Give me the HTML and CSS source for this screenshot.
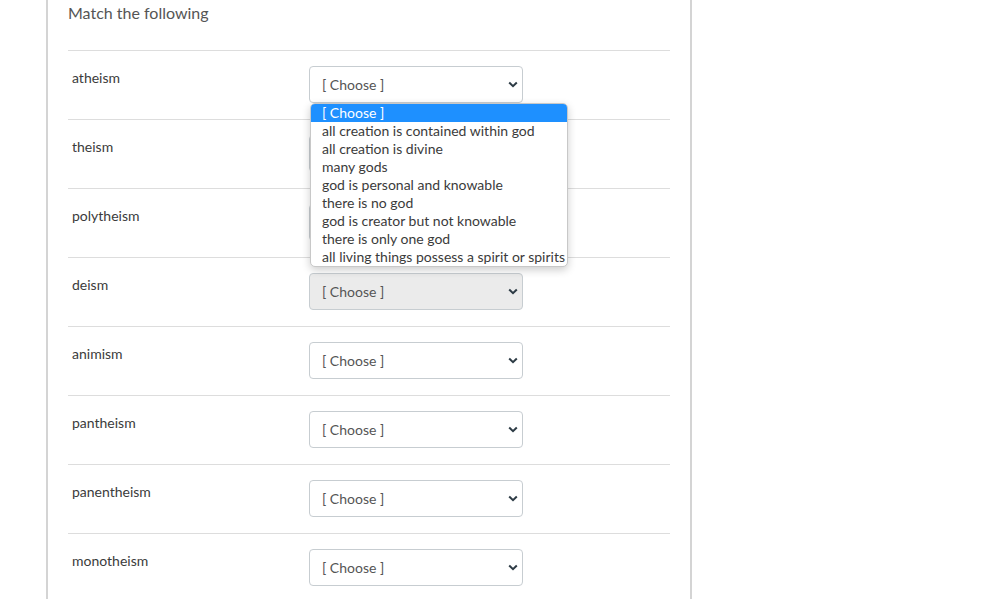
FILE: index.html
```html
<!DOCTYPE html>
<html>
<head>
<meta charset="utf-8">
<link rel="stylesheet" href="styles.css">
</head>
<body>
<div class="card">
  <div class="title">Match the following</div>
  <div class="row">
    <div class="label">atheism</div>
    <div class="select open">
      <span class="val">[ Choose ]</span>
      <svg class="chev" width="10" height="7" viewBox="0 0 10 7"><path d="M1.2 1.5 L5 5.2 L8.8 1.5" fill="none" stroke="#2d3b45" stroke-width="2"/></svg>
      <ul class="list">
        <li class="sel">[ Choose ]</li>
        <li>all creation is contained within god</li>
        <li>all creation is divine</li>
        <li>many gods</li>
        <li>god is personal and knowable</li>
        <li>there is no god</li>
        <li>god is creator but not knowable</li>
        <li>there is only one god</li>
        <li>all living things possess a spirit or spirits</li>
      </ul>
    </div>
  </div>
  <div class="row">
    <div class="label">theism</div>
    <div class="select">
      <span class="val">[ Choose ]</span>
      <svg class="chev" width="10" height="7" viewBox="0 0 10 7"><path d="M1.2 1.5 L5 5.2 L8.8 1.5" fill="none" stroke="#2d3b45" stroke-width="2"/></svg>
    </div>
  </div>
  <div class="row">
    <div class="label">polytheism</div>
    <div class="select">
      <span class="val">[ Choose ]</span>
      <svg class="chev" width="10" height="7" viewBox="0 0 10 7"><path d="M1.2 1.5 L5 5.2 L8.8 1.5" fill="none" stroke="#2d3b45" stroke-width="2"/></svg>
    </div>
  </div>
  <div class="row">
    <div class="label">deism</div>
    <div class="select hover">
      <span class="val">[ Choose ]</span>
      <svg class="chev" width="10" height="7" viewBox="0 0 10 7"><path d="M1.2 1.5 L5 5.2 L8.8 1.5" fill="none" stroke="#2d3b45" stroke-width="2"/></svg>
    </div>
  </div>
  <div class="row">
    <div class="label">animism</div>
    <div class="select">
      <span class="val">[ Choose ]</span>
      <svg class="chev" width="10" height="7" viewBox="0 0 10 7"><path d="M1.2 1.5 L5 5.2 L8.8 1.5" fill="none" stroke="#2d3b45" stroke-width="2"/></svg>
    </div>
  </div>
  <div class="row">
    <div class="label">pantheism</div>
    <div class="select">
      <span class="val">[ Choose ]</span>
      <svg class="chev" width="10" height="7" viewBox="0 0 10 7"><path d="M1.2 1.5 L5 5.2 L8.8 1.5" fill="none" stroke="#2d3b45" stroke-width="2"/></svg>
    </div>
  </div>
  <div class="row">
    <div class="label">panentheism</div>
    <div class="select">
      <span class="val">[ Choose ]</span>
      <svg class="chev" width="10" height="7" viewBox="0 0 10 7"><path d="M1.2 1.5 L5 5.2 L8.8 1.5" fill="none" stroke="#2d3b45" stroke-width="2"/></svg>
    </div>
  </div>
  <div class="row">
    <div class="label">monotheism</div>
    <div class="select">
      <span class="val">[ Choose ]</span>
      <svg class="chev" width="10" height="7" viewBox="0 0 10 7"><path d="M1.2 1.5 L5 5.2 L8.8 1.5" fill="none" stroke="#2d3b45" stroke-width="2"/></svg>
    </div>
  </div>
</div>
</body>
</html>
```
FILE: styles.css
```css
html, body {
  margin: 0;
  padding: 0;
  background: #fff;
  height: 599px;
  overflow: hidden;
}
body {
  font-family: Lato, "Liberation Sans", sans-serif;
  color: #2d3b45;
}
.card {
  margin-left: 46px;
  width: 602px;
  border-left: 2px solid #d4d4d4;
  border-right: 2px solid #d4d4d4;
  padding: 0 20px;
  height: 620px;
}
.title {
  height: 50px;
  box-sizing: border-box;
  padding-top: 3px;
  font-size: 16px;
  line-height: 20px;
  color: #555;
}
.row {
  display: flex;
  align-items: flex-start;
  height: 69px;
  box-sizing: border-box;
  border-top: 1px solid #ddd;
}
.label {
  width: 237px;
  padding-left: 4px;
  padding-top: 18px;
  font-size: 14px;
  line-height: 18px;
  color: #3b3b3b;
}
.select {
  position: relative;
  margin-top: 15px;
  width: 214px;
  height: 37px;
  box-sizing: border-box;
  border: 1px solid #c7cdd1;
  border-radius: 4px;
  background: #fff;
  display: flex;
  align-items: center;
  justify-content: space-between;
  padding: 0 4px 1px 12px;
}
.select.hover {
  background: #ebebeb;
}
.val {
  font-size: 14px;
  color: #555;
}
.chev {
  display: block;
}
.list {
  position: absolute;
  left: 0;
  top: 36px;
  margin: 0;
  padding: 0;
  list-style: none;
  width: 258px;
  box-sizing: border-box;
  background: #fff;
  border: 1px solid #c8c8c8;
  border-radius: 5px;
  box-shadow: 0 3px 8px rgba(0,0,0,0.2);
  overflow: hidden;
  z-index: 5;
}
.list li {
  height: 18px;
  line-height: 18px;
  font-size: 14px;
  color: #3b3b3b;
  padding-left: 11px;
  white-space: nowrap;
}
.list li.sel {
  background: #1e90ff;
  color: #fff;
}
```
